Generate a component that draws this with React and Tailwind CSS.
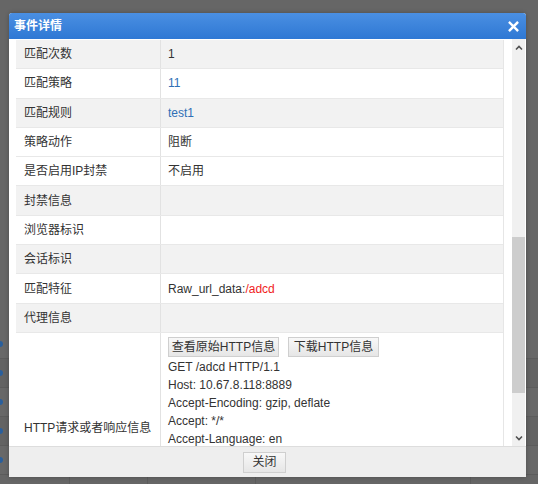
import React from "react";

const rows = [
  { label: "匹配次数", value: "1", bg: "bg-[#f2f2f2]" },
  { label: "匹配策略", value: <span className="text-[#2f6fb6]">11</span>, bg: "bg-white" },
  { label: "匹配规则", value: <span className="text-[#2f6fb6]">test1</span>, bg: "bg-[#f2f2f2]" },
  { label: "策略动作", value: "阻断", bg: "bg-white" },
  { label: "是否启用IP封禁", value: "不启用", bg: "bg-white" },
  { label: "封禁信息", value: "", bg: "bg-[#f2f2f2]" },
  { label: "浏览器标识", value: "", bg: "bg-white" },
  { label: "会话标识", value: "", bg: "bg-[#f2f2f2]" },
  {
    label: "匹配特征",
    value: (
      <span>
        Raw_url_data:<span className="text-[#f01d1d]">/adcd</span>
      </span>
    ),
    bg: "bg-white",
  },
  { label: "代理信息", value: "", bg: "bg-[#f2f2f2]" },
];

const httpLines = [
  "GET /adcd HTTP/1.1",
  "Host: 10.67.8.118:8889",
  "Accept-Encoding: gzip, deflate",
  "Accept: */*",
  "Accept-Language: en",
];

function Btn({ children, className = "" }) {
  return (
    <button
      className={
        "h-[20px] border border-[#cfcfcf] bg-gradient-to-b from-[#f8f8f8] to-[#e6e6e6] text-[12px] leading-[18px] text-[#333] " +
        className
      }
    >
      {children}
    </button>
  );
}

export default function App() {
  return (
    <div
      className="relative w-[538px] h-[484px] overflow-hidden bg-[#666666]"
      style={{ fontFamily: '"Liberation Sans", "Noto Sans CJK SC", sans-serif' }}
    >
      {/* underlying page (dimmed) */}
      <div className="flex flex-col pt-[330px]">
        {[0, 1, 2, 3, 4].map((i) => (
          <div
            key={i}
            className={
              "h-[29px] border-b border-[#5c5c5c] flex items-center " +
              (i % 2 ? "bg-[#636363]" : "bg-[#686868]")
            }
          >
            <div className="w-[3px] h-[6px] rounded-r-full bg-[#2a5f9c]" />
          </div>
        ))}
        <div className="flex h-[40px]">
          <div className="w-[70px] border-r border-[#5c5c5c]" />
          <div className="w-[78px] border-r border-[#5c5c5c]" />
          <div className="w-[108px] border-r border-[#5c5c5c]" />
          <div className="w-[215px] border-r border-[#5c5c5c]" />
        </div>
      </div>

      {/* dialog */}
      <div className="absolute left-[9px] top-[13px] w-[517px] h-[464px] flex flex-col bg-white rounded-t-[3px] shadow-[0_0_4px_rgba(0,0,0,0.25)]">
        <div className="h-[26px] shrink-0 flex items-center justify-between pl-[5px] pr-[7px] rounded-t-[3px] bg-gradient-to-b from-[#4a8fe2] to-[#2e78d4]">
          <span className="text-white text-[12px] font-bold leading-none">事件详情</span>
          <svg width="11" height="11" viewBox="0 0 11 11" className="mt-[1px]">
            <path d="M1.8 1.8 L9.2 9.2 M9.2 1.8 L1.8 9.2" stroke="white" strokeWidth="2.4" strokeLinecap="square" />
          </svg>
        </div>

        <div className="h-[407px] shrink-0 flex overflow-hidden">
          <div className="w-[503px] h-full overflow-hidden pl-[7px] pt-[1px]">
            <div className="w-[488px] border-r border-[#e6e6e6] text-[12px] text-[#333]">
              {rows.map((r) => (
                <div key={r.label} className={"flex h-[29.3px] border-b border-[#e8e8e8] " + r.bg}>
                  <div className="w-[145px] shrink-0 border-r border-[#e2e2e2] flex items-center pl-[8px]">
                    {r.label}
                  </div>
                  <div className="flex-1 flex items-center pl-[7px]">{r.value}</div>
                </div>
              ))}
              <div className="flex bg-white">
                <div className="w-[145px] shrink-0 border-r border-[#e2e2e2] flex items-center pl-[8px]">
                  HTTP请求或者响应信息
                </div>
                <div className="flex-1 pl-[7px] pt-[4px] pb-[75px]">
                  <div className="flex gap-[9px]">
                    <Btn className="w-[111px]">查看原始HTTP信息</Btn>
                    <Btn className="w-[91px]">下载HTTP信息</Btn>
                  </div>
                  <div className="mt-[1px]">
                    {httpLines.map((l, i) => (
                      <div key={i} className="h-[18px] leading-[18px] whitespace-nowrap">
                        {l}
                      </div>
                    ))}
                  </div>
                </div>
              </div>
            </div>
          </div>
          {/* scrollbar */}
          <div className="w-[13px] h-full bg-[#f0f0f0] flex flex-col items-center">
            <div className="h-[17px] w-full flex items-center justify-center">
              <svg width="8" height="6" viewBox="0 0 8 6">
                <path d="M1 4.5 L4 1.5 L7 4.5" fill="none" stroke="#505050" strokeWidth="1.6" />
              </svg>
            </div>
            <div className="h-[181px]" />
            <div className="w-full h-[156px] bg-[#cdcdcd]" />
            <div className="flex-1" />
            <div className="h-[17px] w-full flex items-center justify-center">
              <svg width="8" height="6" viewBox="0 0 8 6">
                <path d="M1 1.5 L4 4.5 L7 1.5" fill="none" stroke="#505050" strokeWidth="1.6" />
              </svg>
            </div>
          </div>
        </div>

        <div className="flex-1 bg-[#eeeeee] border-t border-[#dddddd] flex items-center justify-center pr-[6px]">
          <Btn className="w-[43px] h-[21px]">关闭</Btn>
        </div>
      </div>
    </div>
  );
}
